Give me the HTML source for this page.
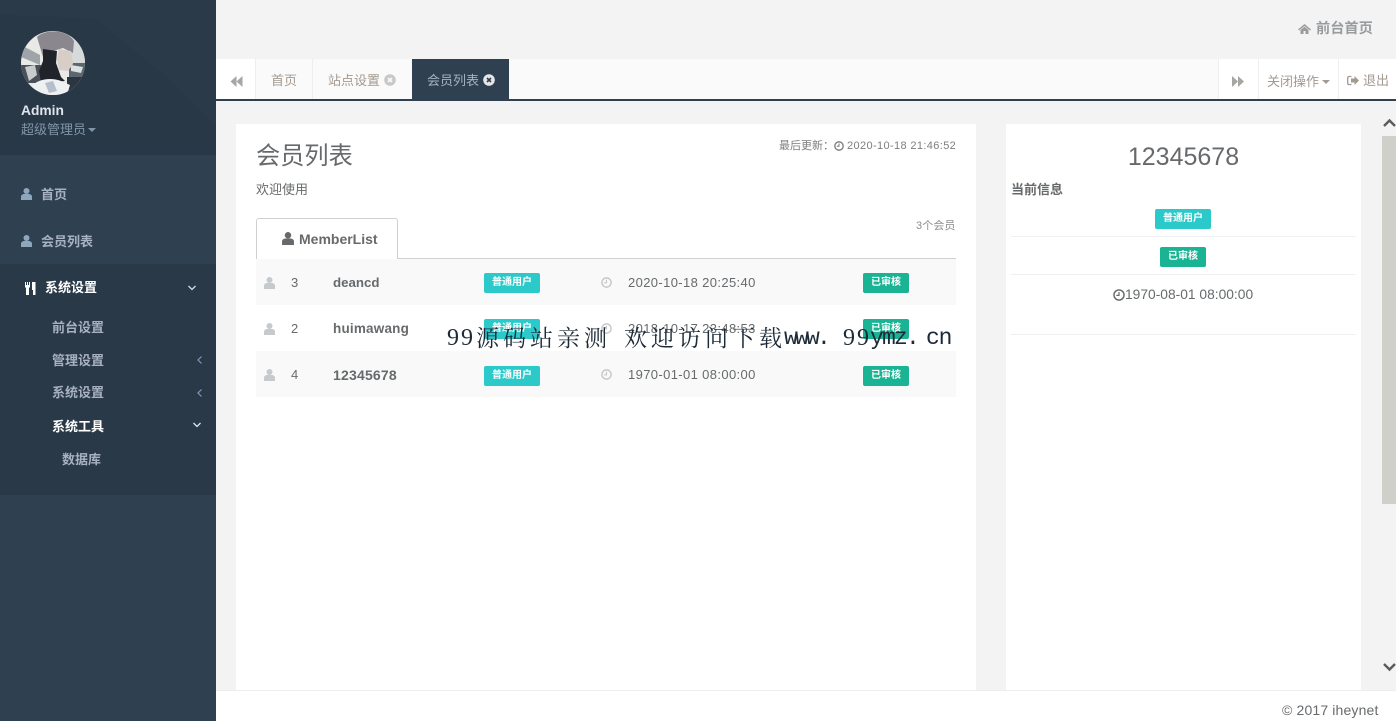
<!DOCTYPE html>
<html lang="zh">
<head>
<meta charset="utf-8">
<title>会员列表</title>
<style>
html,body{margin:0;padding:0;width:1396px;height:721px;overflow:hidden;background:#f3f3f3}
body{position:relative;font-family:"Liberation Sans","Noto Sans CJK SC",sans-serif;font-size:13px;color:#676a6c}
.a{position:absolute;white-space:nowrap;line-height:1}
.b{position:absolute}
svg{position:absolute;display:block;overflow:visible}
.nav{color:#a7b1c2}
.bold{font-weight:bold}
.d{letter-spacing:.37px}
.lbl{position:absolute;height:20px;border-radius:2px;color:#fff;font-size:10px;font-weight:bold;line-height:20px;text-align:center}
.cy{background:#2bc9c9;width:56px}
.gr{background:#1ab394;width:46px}
.w{color:#1d2a38;font-family:"Liberation Serif","Noto Serif CJK SC",serif;font-size:23px;letter-spacing:4px;top:327px}
.m{color:#1d2a38;font-family:"Liberation Mono",monospace;font-size:23px;top:327px}
</style>
</head>
<body>
<!-- sidebar -->
<div class="b" style="left:0;top:0;width:216px;height:721px;background:#2f4050"></div>
<div class="b" style="left:0;top:0;width:216px;height:155px;background:#293846"></div>
<svg style="left:0;top:0" width="216" height="155"><path d="M0 0H216V125L170 80L95 18L0 15Z" fill="#2a3a49"/></svg>
<div class="b" style="left:0;top:264px;width:216px;height:231px;background:#2a3947"></div>

<svg style="left:21px;top:31px" width="64" height="64" viewBox="0 0 64 64">
<defs><clipPath id="c"><circle cx="32" cy="32" r="32"/></clipPath></defs>
<g clip-path="url(#c)">
<rect width="64" height="64" fill="#e9e9e6"/>
<path d="M0 14L19 24V34L0 26Z" fill="#9ea4a8"/>
<path d="M0 34H20V52H0Z" fill="#4a5058"/>
<path d="M4 36L14 34L16 44L8 50Z" fill="#c9cccc"/>
<path d="M50 0H64V32H50Z" fill="#d7dadb"/>
<path d="M48 32H64V48H48Z" fill="#5b666e"/>
<path d="M50 34L62 36L60 42L50 40Z" fill="#dde0e0"/>
<path d="M46 46H64V64H46Z" fill="#2a3642"/>
<path d="M16 6C24-2 46-2 53 10L52 22L42 17L32 20L22 26Z" fill="#8a878f"/>
<path d="M38 18L50 20L52 33L47 40L38 39L36 28Z" fill="#d8cdc7"/>
<path d="M22 18L36 20L35 32L40 46L44 50L20 52L18 40L22 30Z" fill="#20232a"/>
<path d="M10 56C16 48 30 46 40 50L49 54L46 64H14Z" fill="#eef0f2"/>
<path d="M24 52L32 50L36 60L28 62Z" fill="#b5bfcb"/>
</g>
</svg>

<div class="a bold" style="left:21px;top:104px;font-size:13.800px;color:#dfe4ed">Admin</div>
<div class="a" style="left:21px;top:123px;font-size:13px;color:#8095a8">超级管理员</div>
<svg style="left:88px;top:128px" width="8" height="5"><path d="M0 0H8L4 4Z" fill="#8095a8"/></svg>

<svg style="left:21px;top:188px" width="11" height="12" viewBox="0 0 11 12"><circle cx="5.500" cy="3" r="3" fill="#8fa6bf"/><path d="M0 12V8.500C0 7 2 6 3 6H8C9 6 11 7 11 8.500V12Z" fill="#8fa6bf"/></svg>
<div class="a bold nav" style="left:41px;top:188px">首页</div>
<svg style="left:21px;top:235px" width="11" height="12" viewBox="0 0 11 12"><circle cx="5.500" cy="3" r="3" fill="#8fa6bf"/><path d="M0 12V8.500C0 7 2 6 3 6H8C9 6 11 7 11 8.500V12Z" fill="#8fa6bf"/></svg>
<div class="a bold nav" style="left:41px;top:235px">会员列表</div>

<svg style="left:25px;top:282px" width="11" height="13" viewBox="0 0 11 13"><path d="M0 0H1V3H2V0H3V3H4V0H5V5L4 6V13H1V6L0 5Z M7 0H10.500V13H8V8H7Z" fill="#fff"/></svg>
<div class="a bold" style="left:45px;top:281px;color:#fff">系统设置</div>
<svg style="left:188px;top:285px" width="8" height="6"><path d="M0.500 1L4 4.500L7.500 1" fill="none" stroke="#d8dde4" stroke-width="1.300"/></svg>

<div class="a bold nav" style="left:52px;top:321px">前台设置</div>
<div class="a bold nav" style="left:52px;top:354px">管理设置</div>
<svg style="left:197px;top:356px" width="6" height="8"><path d="M4.500 0.500L1 4L4.500 7.500" fill="none" stroke="#7f9bb8" stroke-width="1.200"/></svg>
<div class="a bold nav" style="left:52px;top:386px">系统设置</div>
<svg style="left:197px;top:389px" width="6" height="8"><path d="M4.500 0.500L1 4L4.500 7.500" fill="none" stroke="#7f9bb8" stroke-width="1.200"/></svg>
<div class="a bold" style="left:52px;top:420px;color:#fff">系统工具</div>
<svg style="left:193px;top:422px" width="8" height="6"><path d="M0.500 1L4 4.500L7.500 1" fill="none" stroke="#e3e7ec" stroke-width="1.300"/></svg>
<div class="a bold nav" style="left:62px;top:453px">数据库</div>

<!-- top bar -->
<svg style="left:1298px;top:24px" width="13" height="10" viewBox="0 0 13 10"><path d="M6.500 0L13 5.500L12 6.500L6.500 2L1 6.500L0 5.500Z M2.500 6L6.500 2.800L10.500 6V10H7.500V7H5.500V10H2.500Z" fill="#999c9e"/></svg>
<div class="a bold" style="left:1316px;top:22px;color:#999c9e;font-size:14.200px">前台首页</div>

<!-- tabs -->
<div class="b" style="left:216px;top:59px;width:1180px;height:40px;background:#fafafa"></div>
<div class="b" style="left:216px;top:59px;width:40px;height:40px;background:#fff;border-right:1px solid #eee;box-sizing:border-box"></div>
<svg style="left:230px;top:76px" width="13" height="11" viewBox="0 0 13 11"><path d="M6.500 0V11L0.500 5.500Z M12.500 0V11L6.500 5.500Z" fill="#a8a6a2"/></svg>
<div class="a" style="left:271px;top:74px;color:#a39a90">首页</div>
<div class="b" style="left:312px;top:59px;width:1px;height:40px;background:#eee"></div>
<div class="a" style="left:328px;top:74px;color:#a39a90">站点设置</div>
<svg style="left:384px;top:74px" width="12" height="12" viewBox="0 0 12 12"><circle cx="6" cy="6" r="5.800" fill="#c8c8c8"/><path d="M4 4L8 8M8 4L4 8" stroke="#fafafa" stroke-width="1.600"/></svg>
<div class="b" style="left:412px;top:59px;width:97px;height:40px;background:#2f4050"></div>
<div class="a" style="left:427px;top:74px;color:#a7b1c2">会员列表</div>
<svg style="left:483px;top:74px" width="12" height="12" viewBox="0 0 12 12"><circle cx="6" cy="6" r="5.800" fill="#e4e6e8"/><path d="M4 4L8 8M8 4L4 8" stroke="#2f4050" stroke-width="1.600"/></svg>

<div class="b" style="left:1218px;top:59px;width:178px;height:40px;background:#fff"></div>
<div class="b" style="left:1218px;top:59px;width:1px;height:40px;background:#eee"></div>
<div class="b" style="left:1258px;top:59px;width:1px;height:40px;background:#eee"></div>
<div class="b" style="left:1338px;top:59px;width:1px;height:40px;background:#eee"></div>
<svg style="left:1232px;top:76px" width="12" height="11" viewBox="0 0 12 11"><path d="M0 0V11L6 5.500Z M6 0V11L12 5.500Z" fill="#a8a6a2"/></svg>
<div class="a" style="left:1267px;top:75px;color:#a39a90">关闭操作</div>
<svg style="left:1322px;top:80px" width="8" height="5"><path d="M0 0H8L4 4Z" fill="#a39a90"/></svg>
<svg style="left:1347px;top:75px" width="12" height="11" viewBox="0 0 12 11"><path d="M4.500 1.500H2C1.200 1.500 0.700 2 0.700 2.800V8.200C0.700 9 1.200 9.500 2 9.500H4.500" fill="none" stroke="#a39a90" stroke-width="1.300"/><path d="M4 3.500H7.500V1L12 5.500L7.500 10V7.500H4Z" fill="#a39a90"/></svg>
<div class="a" style="left:1363px;top:74px;color:#a39a90">退出</div>

<div class="b" style="left:216px;top:99px;width:1180px;height:2px;background:#2f4050"></div>

<!-- main panel -->
<div class="b" style="left:236px;top:124px;width:740px;height:566px;background:#fff"></div>
<div class="a" style="left:256px;top:145px;font-size:24.200px;color:#676a6c">会员列表</div>
<div class="a" style="left:256px;top:183px;color:#676a6c">欢迎使用</div>
<div class="a" style="left:779px;top:141px;font-size:11px;color:#7c7e80;line-height:10px">最后更新：</div>
<svg style="left:834px;top:141px" width="10" height="10" viewBox="0 0 10 10"><circle cx="5" cy="5" r="4.200" fill="none" stroke="#777" stroke-width="1.300"/><path d="M5 2.500V5.300H2.800" fill="none" stroke="#777"/></svg>
<div class="a d" style="left:847px;top:141px;font-size:11px;color:#7c7e80">2020-10-18 21:46:52</div>
<div class="a" style="left:916px;top:221px;font-size:11px;color:#8a8c8e;letter-spacing:.1px">3个会员</div>

<div class="b" style="left:256px;top:258px;width:700px;height:1px;background:#d0d0cc"></div>
<div class="b" style="left:256px;top:218px;width:142px;height:41px;box-sizing:border-box;background:#fff;border:1px solid #d0d0cc;border-bottom:0;border-radius:3px 3px 0 0"></div>
<svg style="left:282px;top:232px" width="12" height="13" viewBox="0 0 11 12"><circle cx="5.500" cy="3" r="3" fill="#676a6c"/><path d="M0 12V8.500C0 7 2 6 3 6H8C9 6 11 7 11 8.500V12Z" fill="#676a6c"/></svg>
<div class="a bold" style="left:299px;top:232px;color:#676a6c;font-size:14px">MemberList</div>

<div class="b" style="left:256px;top:259px;width:700px;height:46px;background:#f9f9f9"></div>
<div class="b" style="left:256px;top:351px;width:700px;height:46px;background:#f9f9f9"></div>

<svg style="left:264px;top:277px" width="11" height="12" viewBox="0 0 11 12"><circle cx="5.500" cy="3" r="3" fill="#c6cacc"/><path d="M0 12V8.500C0 7 2 6 3 6H8C9 6 11 7 11 8.500V12Z" fill="#c6cacc"/></svg>
<div class="a d" style="left:291px;top:276px;color:#676a6c">3</div>
<div class="a bold" style="left:333px;top:276px;color:#676a6c;font-size:13.300px">deancd</div>
<div class="lbl cy" style="left:484px;top:273px">普通用户</div>
<svg style="left:601px;top:277px" width="11" height="11" viewBox="0 0 10 10"><circle cx="5" cy="5" r="4.200" fill="none" stroke="#c6c8c8" stroke-width="1.300"/><path d="M5 2.500V5.300H2.800" fill="none" stroke="#c6c8c8"/></svg>
<div class="a d" style="left:628px;top:276px;color:#676a6c">2020-10-18 20:25:40</div>
<div class="lbl gr" style="left:863px;top:273px">已审核</div>

<svg style="left:264px;top:323px" width="11" height="12" viewBox="0 0 11 12"><circle cx="5.500" cy="3" r="3" fill="#c6cacc"/><path d="M0 12V8.500C0 7 2 6 3 6H8C9 6 11 7 11 8.500V12Z" fill="#c6cacc"/></svg>
<div class="a d" style="left:291px;top:322px;color:#676a6c">2</div>
<div class="a bold" style="left:333px;top:322px;color:#676a6c;font-size:13.500px;letter-spacing:.2px">huimawang</div>
<div class="lbl cy" style="left:484px;top:319px">普通用户</div>
<svg style="left:601px;top:323px" width="11" height="11" viewBox="0 0 10 10"><circle cx="5" cy="5" r="4.200" fill="none" stroke="#c6c8c8" stroke-width="1.300"/><path d="M5 2.500V5.300H2.800" fill="none" stroke="#c6c8c8"/></svg>
<div class="a d" style="left:628px;top:322px;color:#676a6c">2018-10-17 23:48:53</div>
<div class="lbl gr" style="left:863px;top:319px">已审核</div>

<svg style="left:264px;top:369px" width="11" height="12" viewBox="0 0 11 12"><circle cx="5.500" cy="3" r="3" fill="#c6cacc"/><path d="M0 12V8.500C0 7 2 6 3 6H8C9 6 11 7 11 8.500V12Z" fill="#c6cacc"/></svg>
<div class="a d" style="left:291px;top:368px;color:#676a6c">4</div>
<div class="a bold" style="left:333px;top:368px;color:#676a6c;font-size:14px;letter-spacing:.2px">12345678</div>
<div class="lbl cy" style="left:484px;top:366px">普通用户</div>
<svg style="left:601px;top:369px" width="11" height="11" viewBox="0 0 10 10"><circle cx="5" cy="5" r="4.200" fill="none" stroke="#c6c8c8" stroke-width="1.300"/><path d="M5 2.500V5.300H2.800" fill="none" stroke="#c6c8c8"/></svg>
<div class="a d" style="left:628px;top:368px;color:#676a6c">1970-01-01 08:00:00</div>
<div class="lbl gr" style="left:863px;top:366px">已审核</div>

<!-- right panel -->
<div class="b" style="left:1006px;top:124px;width:355px;height:566px;background:#fff"></div>
<div class="a" style="left:1006px;width:355px;text-align:center;top:145px;font-size:25px;color:#676a6c">12345678</div>
<div class="a bold" style="left:1011px;top:183px;color:#676a6c">当前信息</div>
<div class="lbl cy" style="left:1155px;top:209px">普通用户</div>
<div class="b" style="left:1011px;top:236px;width:345px;height:1px;background:#f0f0f0"></div>
<div class="lbl gr" style="left:1160px;top:247px">已审核</div>
<div class="b" style="left:1011px;top:274px;width:345px;height:1px;background:#f0f0f0"></div>
<svg style="left:1113px;top:289px" width="12" height="12" viewBox="0 0 10 10"><circle cx="5" cy="5" r="4.200" fill="none" stroke="#676a6c" stroke-width="1.200"/><path d="M5 2.500V5.300H2.800" fill="none" stroke="#676a6c"/></svg>
<div class="a" style="left:1125px;top:288px;font-size:13.800px;color:#676a6c">1970-08-01 08:00:00</div>
<div class="b" style="left:1011px;top:334px;width:345px;height:1px;background:#f0f0f0"></div>

<!-- scrollbar -->
<div class="b" style="left:1382px;top:136px;width:14px;height:368px;background:#d0d0ca"></div>
<svg style="left:1383px;top:118px" width="13" height="10"><path d="M1 8L6.500 2.500L12 8" fill="none" stroke="#5a5a5f" stroke-width="2.400"/></svg>
<svg style="left:1383px;top:662px" width="13" height="10"><path d="M1 2L6.500 7.500L12 2" fill="none" stroke="#5a5a5f" stroke-width="2.400"/></svg>

<!-- footer -->
<div class="b" style="left:216px;top:690px;width:1180px;height:31px;background:#fff;border-top:1px solid #eee;box-sizing:border-box"></div>
<div class="a" style="left:1282px;top:703px;color:#676a6c;font-size:14px;letter-spacing:.15px">© 2017 iheynet</div>

<!-- watermark -->
<div class="a w" style="left:447px;letter-spacing:2px;font-size:24px;top:326px">99</div>
<div class="a w" style="left:476px">源码站亲测</div>
<div class="a w" style="left:624px">欢迎访问下载</div>
<div class="a m" style="left:784px;letter-spacing:-2.800px">www.</div>
<div class="a w" style="left:843px;letter-spacing:2px;font-size:24px;top:326px">99</div>
<div class="a m" style="left:870px;letter-spacing:-1.800px">ymz.</div>
<div class="a m" style="left:926px;letter-spacing:-1.200px">cn</div>
</body>
</html>
